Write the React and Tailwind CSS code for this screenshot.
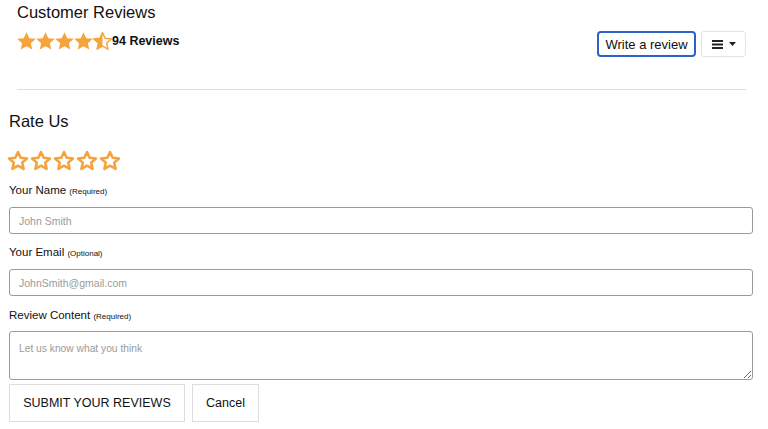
import React from "react";

const STAR = "M12 2.2l2.9 6.3 6.9.7-5.2 4.6 1.5 6.8L12 17.1l-6.1 3.5 1.5-6.8-5.2-4.6 6.9-.7z";

function FilledStar() {
  return (
    <svg width="19" height="18" viewBox="2 2 20 19">
      <path d={STAR} fill="#f5a33c" />
    </svg>
  );
}

function HalfStar() {
  return (
    <svg width="19" height="18" viewBox="1.5 1.5 21 20">
      <defs>
        <clipPath id="halfclip">
          <rect x="0" y="0" width="12" height="24" />
        </clipPath>
      </defs>
      <path d={STAR} fill="#f5a33c" clipPath="url(#halfclip)" />
      <path d={STAR} fill="none" stroke="#f5a33c" strokeWidth="1.6" strokeLinejoin="round" />
    </svg>
  );
}

function OutlineStar() {
  return (
    <svg width="22" height="22" viewBox="0 0 24 24">
      <path d={STAR} fill="none" stroke="#f5a33c" strokeWidth="2.8" strokeLinejoin="round" />
    </svg>
  );
}

export default function App() {
  const font = { fontFamily: '"Liberation Sans", Arial, sans-serif' };
  return (
    <div className="w-[768px] h-[429px] bg-white text-[#111] overflow-hidden" style={font}>
      <div className="pl-[17px] pr-[22px]">
        <div className="flex justify-between items-start">
          <div>
            <div className="text-[16.5px] leading-[22px] pt-[1px]">Customer Reviews</div>
            <div className="flex items-center mt-[9px]">
              <div className="flex">
                <FilledStar />
                <FilledStar />
                <FilledStar />
                <FilledStar />
                <HalfStar />
              </div>
              <span className="text-[12.5px] font-bold leading-[16px]">94 Reviews</span>
            </div>
          </div>
          <div className="flex items-center gap-[5px] mt-[31px]">
            <button className="h-[26px] w-[99px] border-2 border-[#2f62c9] rounded-[4px] text-[13px] leading-none bg-white text-[#111]">
              Write a review
            </button>
            <button className="h-[26px] w-[45px] border border-[#e2e2e2] rounded-[3px] bg-white flex items-center justify-center gap-[6px]">
              <svg width="11" height="9" viewBox="0 0 11 9">
                <rect x="0" y="0" width="11" height="2" fill="#222" />
                <rect x="0" y="3.5" width="11" height="2" fill="#222" />
                <rect x="0" y="7" width="11" height="2" fill="#222" />
              </svg>
              <svg width="7" height="4" viewBox="0 0 7 4">
                <path d="M0 0h7L3.5 4z" fill="#222" />
              </svg>
            </button>
          </div>
        </div>
        <div className="mt-[32px] h-px bg-[#dddddd]" />
      </div>

      <div className="pl-[9px] pr-[15px]">
        <div className="text-[16.5px] leading-[22px] mt-[20px]">Rate Us</div>
        <div className="flex gap-[1px] mt-[18px] -ml-[2px]">
          <OutlineStar />
          <OutlineStar />
          <OutlineStar />
          <OutlineStar />
          <OutlineStar />
        </div>

        <div className="mt-[11px] text-[11.5px] leading-[14px]">
          Your Name <span className="text-[8px]">(Required)</span>
        </div>
        <input
          className="mt-[8px] w-full h-[27px] border border-[#9a9a9a] rounded-[3px] px-[9px] text-[10.5px] placeholder:text-[#9a9a9a] outline-none"
          placeholder="John Smith"
          style={font}
        />

        <div className="mt-[11px] text-[11.5px] leading-[14px]">
          Your Email <span className="text-[8px]">(Optional)</span>
        </div>
        <input
          className="mt-[8px] w-full h-[27px] border border-[#9a9a9a] rounded-[3px] px-[9px] text-[10.5px] placeholder:text-[#9a9a9a] outline-none"
          placeholder="JohnSmith@gmail.com"
          style={font}
        />

        <div className="mt-[12px] text-[11.5px] leading-[14px]">
          Review Content <span className="text-[8px]">(Required)</span>
        </div>
        <textarea
          className="block mt-[7px] w-full h-[49px] border border-[#9a9a9a] rounded-[3px] px-[9px] pt-[10px] text-[10.25px] leading-[13px] placeholder:text-[#9a9a9a] outline-none"
          placeholder="Let us know what you think"
          style={font}
        />

        <div className="flex gap-[7px] mt-[4px]">
          <button className="h-[38px] w-[176px] border border-[#dddddd] bg-white text-[12.5px] text-[#111]" style={font}>
            SUBMIT YOUR REVIEWS
          </button>
          <button className="h-[38px] w-[67px] border border-[#dddddd] bg-white text-[12.5px] text-[#111]" style={font}>
            Cancel
          </button>
        </div>
      </div>
    </div>
  );
}
